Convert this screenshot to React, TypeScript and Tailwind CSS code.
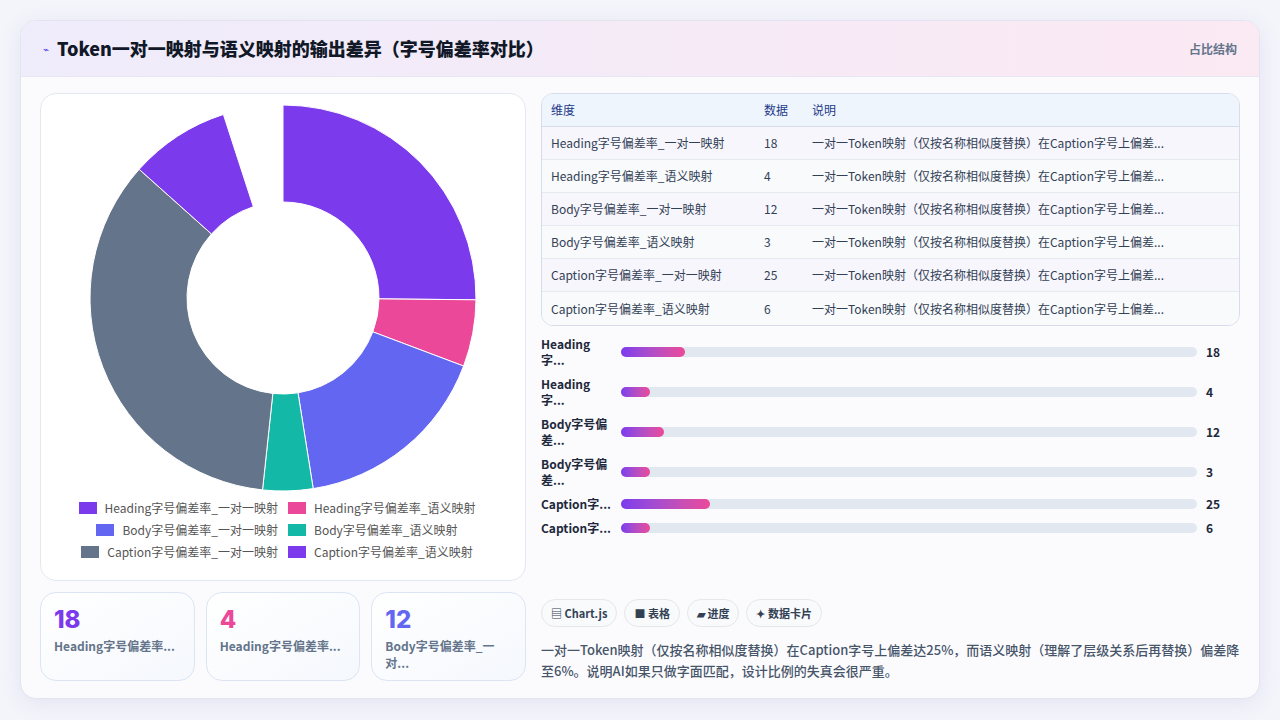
import React from "react";

const F = { fontFamily: '"Noto Sans CJK SC", sans-serif' };
const colors = ["#7c3aed", "#ec4899", "#6366f1", "#14b8a6", "#64748b", "#7c3aed"];
const vals = [18, 4, 12, 3, 25, 6];
const names = [
  "Heading字号偏差率_一对一映射",
  "Heading字号偏差率_语义映射",
  "Body字号偏差率_一对一映射",
  "Body字号偏差率_语义映射",
  "Caption字号偏差率_一对一映射",
  "Caption字号偏差率_语义映射",
];
const barLabels = ["Heading\n字...", "Heading\n字...", "Body字号偏\n差...", "Body字号偏\n差...", "Caption字...", "Caption字..."];

function Donut() {
  const cx = 200, cy = 200, R = 193, r = 96;
  let a = 0;
  const total = 68;
  const pt = (ang: number, rad: number) => {
    const t = ((ang - 90) * Math.PI) / 180;
    return [cx + rad * Math.cos(t), cy + rad * Math.sin(t)];
  };
  return (
    <svg width="400" height="400" viewBox="0 0 400 400">
      {vals.map((v, i) => {
        const s = a;
        const e = a + (v / total) * 342;
        a = e;
        const [x1, y1] = pt(s, R), [x2, y2] = pt(e, R), [x3, y3] = pt(e, r), [x4, y4] = pt(s, r);
        const lg = e - s > 180 ? 1 : 0;
        return (
          <path key={i} fill={colors[i]} stroke="#fff" strokeWidth="1"
            d={`M${x1} ${y1} A${R} ${R} 0 ${lg} 1 ${x2} ${y2} L${x3} ${y3} A${r} ${r} 0 ${lg} 0 ${x4} ${y4} Z`} />
        );
      })}
    </svg>
  );
}

export default function App() {
  return (
    <div className="w-[1280px] h-[720px] bg-[#f4f5fb] p-[20px] text-[#1e293b]" style={F}>
      <div className="h-[679px] rounded-2xl border border-[#e4e4f0] bg-[#fbfbfe] overflow-hidden flex flex-col shadow-[0_4px_20px_rgba(100,100,160,0.12)]">
        <div className="h-[56px] shrink-0 flex items-center justify-between px-[22px] bg-gradient-to-r from-[#efecfb] to-[#fbe9f3] border-b border-[#e8e6f3]">
          <div className="flex items-center gap-[8px]">
            <span className="text-[#4f46e5] text-[10px]">⌁</span>
            <span className="text-[18px] font-black text-[#111827]">Token一对一映射与语义映射的输出差异（字号偏差率对比）</span>
          </div>
          <span className="text-[12px] font-bold text-[#64748b]">占比结构</span>
        </div>
        <div className="flex-1 flex gap-[15px] px-[19px] pt-[16px] pb-[18px]">
          <div className="w-[486px] flex flex-col gap-[11px]">
            <div className="h-[488px] rounded-2xl border border-[#e2e8f0] bg-white flex flex-col items-center pt-[4px]">
              <Donut />
              <div className="mt-[0px] grid grid-cols-2 gap-x-[10px] gap-y-[3px] text-[12px] text-[#555]">
                {names.map((n, i) => (
                  <div key={i} className={`flex items-center gap-[8px] h-[19px] ${i % 2 === 0 ? "justify-end" : ""}`}>
                    <span className="w-[18px] h-[12px]" style={{ background: colors[i] }} />
                    <span>{n}</span>
                  </div>
                ))}
              </div>
            </div>
            <div className="flex gap-[11px]">
              {[["18", "#7c3aed", "Heading字号偏差率..."], ["4", "#ec4899", "Heading字号偏差率..."], ["12", "#6366f1", "Body字号偏差率_一\n对..."]].map(([v, c, t], i) => (
                <div key={i} className="flex-1 h-[89px] rounded-2xl border border-[#dbe5f3] bg-gradient-to-br from-white to-[#f5f8fd] px-[13px] pt-[12px]">
                  <div className="text-[24px] font-extrabold leading-[30px]" style={{ color: c, fontFamily: "Inter, sans-serif" }}>{v}</div>
                  <div className="text-[12px] font-bold text-[#64748b] leading-[17px] mt-[2px] whitespace-pre-line">{t}</div>
                </div>
              ))}
            </div>
          </div>
          <div className="flex-1 flex flex-col">
            <div className="rounded-xl border border-[#d6dcea] overflow-hidden text-[12px]">
              <div className="flex h-[33px] items-center bg-[#eef5fd] text-[#1e3a8a] border-b border-[#d6dcea]">
                <div className="w-[222px] pl-[9px]">维度</div>
                <div className="w-[48px]">数据</div>
                <div>说明</div>
              </div>
              {names.map((n, i) => (
                <div key={i} className={`flex h-[33px] items-center text-[#334155] ${i < 5 ? "border-b border-[#e5e9f0]" : ""} ${i % 2 === 0 ? "bg-[#f7f6fd]" : "bg-[#f8fafc]"}`}>
                  <div className="w-[222px] pl-[9px]">{n}</div>
                  <div className="w-[48px]">{vals[i]}</div>
                  <div>一对一Token映射（仅按名称相似度替换）在Caption字号上偏差...</div>
                </div>
              ))}
            </div>
            <div className="mt-[6px] flex flex-col text-[12px] font-bold text-[#1e293b]">
              {barLabels.map((l, i) => (
                <div key={i} className={`flex items-center ${i < 4 ? "h-[40px]" : "h-[24px]"}`}>
                  <div className="w-[80px] leading-[16px] whitespace-pre-line">{l}</div>
                  <div className="flex-1 h-[10px] rounded-full bg-[#e2e8f0]">
                    <div className="h-full rounded-full bg-gradient-to-r from-[#7c3aed] to-[#ec4899]" style={{ width: `${Math.max(5, (vals[i] / 25) * 15.5)}%` }} />
                  </div>
                  <div className="w-[43px] pl-[9px]">{vals[i]}</div>
                </div>
              ))}
            </div>
            <div className="mt-auto flex gap-[7px] text-[11px] font-bold text-[#334155]">
              {["▤ Chart.js", "■ 表格", "▰ 进度", "✦ 数据卡片"].map((t) => (
                <span key={t} className="h-[28px] px-[9px] rounded-full border border-[#e5e7eb] bg-[#f9fafb] flex items-center">{t}</span>
              ))}
            </div>
            <p className="mt-[12px] text-[13px] leading-[21px] text-[#475569] font-medium">
              一对一Token映射（仅按名称相似度替换）在Caption字号上偏差达25%，而语义映射（理解了层级关系后再替换）偏差降至6%。说明AI如果只做字面匹配，设计比例的失真会很严重。
            </p>
          </div>
        </div>
      </div>
    </div>
  );
}
